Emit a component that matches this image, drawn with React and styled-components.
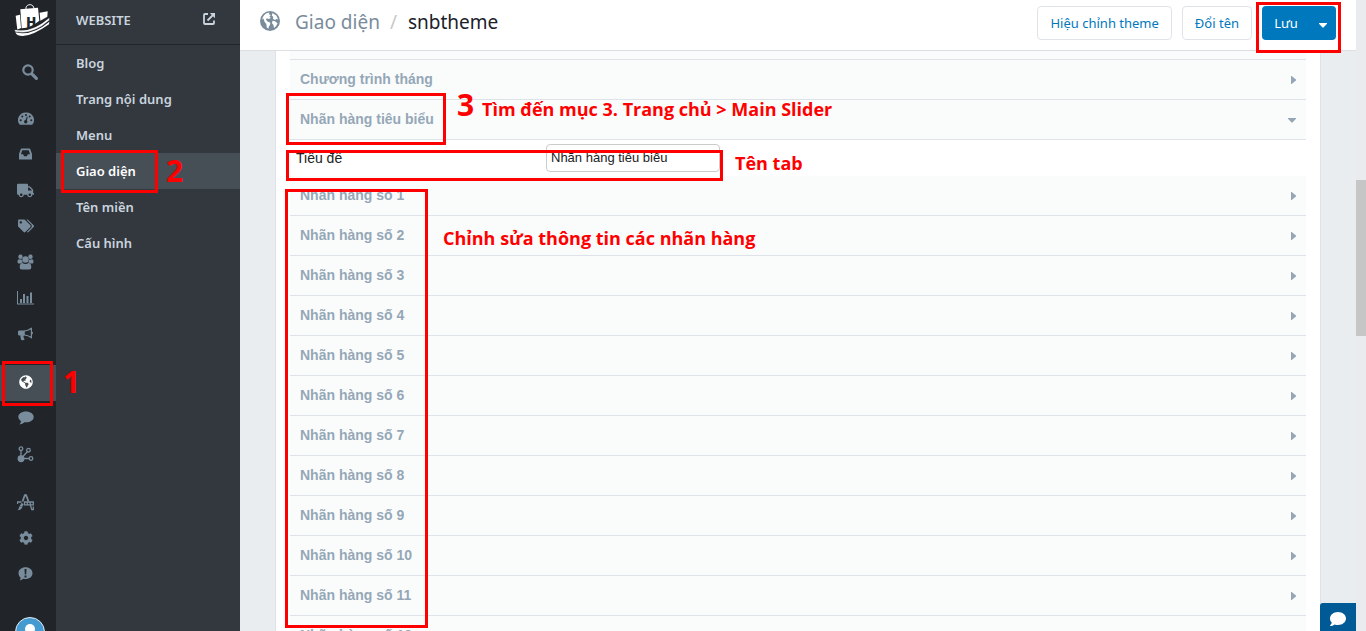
import React from 'react';
import styled, { createGlobalStyle, css } from 'styled-components';
import { FaTruck, FaTags, FaGlobeAmericas, FaComment, FaCog } from 'react-icons/fa';

const GlobalStyle = createGlobalStyle`
  *, *::before, *::after { box-sizing: border-box; }
  body { margin: 0; font-family: 'Open Sans', 'Noto Sans', sans-serif; overflow: hidden; }
  button, input { font: inherit; margin: 0; }
  a { color: inherit; text-decoration: none; }
`;

const Page = styled.div`
  display: flex;
  height: 100vh;
  overflow: hidden;
  background: #e9edf0;
`;

const Rail = styled.nav`
  flex: 0 0 56px;
  display: flex;
  flex-direction: column;
  background: #212429;
  color: #798c9c;
  & > * { flex-shrink: 0; }
`;

const LogoLink = styled.a`
  display: block;
  height: 37px;
  padding: 3px 0 0 14px;
`;

const SearchButton = styled.button`
  display: block;
  width: 100%;
  height: 36px;
  margin: 18px 0 10px;
  padding: 2px 0 0 4px;
  border: 0;
  background: none;
  color: inherit;
`;

const RailGroup = styled.div`
  display: flex;
  flex-direction: column;
  margin-bottom: 12px;
`;

const RailItem = styled.a`
  position: relative;
  display: flex;
  align-items: center;
  height: 36px;
  padding: 0 0 2px 17px;
  font-size: 15px;
  ${(p) => p.$active && css`background: #464e56; && { color: #fff; }`}
`;

const RailIcon = styled.span`
  display: flex;
  justify-content: center;
  width: 17px;
  svg { display: block; flex: none; }
`;

const Avatar = styled.a`
  display: block;
  margin: 12px 0 0 15px;
  height: 30px;
`;

const Sidebar = styled.aside`
  flex: 0 0 184px;
  background: #33373e;
  color: #c8d4de;
  font-family: 'Noto Sans', 'Open Sans', sans-serif;
  font-size: 13px;
  font-weight: 600;
`;

const SidebarHead = styled.div`
  display: flex;
  align-items: center;
  justify-content: space-between;
  height: 45px;
  padding: 0 25px 4px 20px;
  border-bottom: 1px solid #212429;
`;

const MenuItem = styled.a`
  position: relative;
  display: flex;
  align-items: center;
  height: 36px;
  padding-left: 20px;
  ${(p) => p.$active && css`background: #464e56; && { color: #fff; }`}
`;

const Main = styled.main`
  position: relative;
  flex: 1;
  min-width: 0;
  display: flex;
  flex-direction: column;
`;

const Header = styled.header`
  position: relative;
  z-index: 2;
  flex: none;
  display: flex;
  align-items: flex-start;
  gap: 10px;
  height: 51px;
  padding: 6px 20px 10px;
  background: #fff;
  border-bottom: 1px solid #dde0e3;
`;

const Breadcrumb = styled.div`
  flex: 1;
  display: flex;
  align-items: center;
  height: 32px;
  font-family: 'Noto Sans', sans-serif;
  font-size: 19px;
  color: #798c9c;
  svg { margin: 0 15px 2px 0; }
`;

const Slash = styled.span`
  margin: 0 11px 0 10px;
  color: #c8c8c8;
`;

const Current = styled.span`
  color: #1b2129;
`;

const Button = styled.button`
  height: 34px;
  padding: 0 12px;
  border: 1px solid #dfe3e8;
  border-radius: 4px;
  background: #fff;
  color: #0078bd;
  font-family: 'Noto Sans', sans-serif;
  font-size: 13px;
  white-space: nowrap;
`;

const SaveGroup = styled.div`
  position: relative;
  display: flex;
`;

const SaveButton = styled(Button)`
  width: 48px;
  border: 0;
  border-radius: 4px 0 0 4px;
  background: #0078bd;
  color: #fff;
`;

const SaveToggle = styled(SaveButton)`
  display: flex;
  align-items: center;
  justify-content: center;
  width: 26px;
  padding: 4px 0 0;
  border-radius: 0 4px 4px 0;
`;

const Scroll = styled.div`
  flex: 1;
  min-height: 0;
  overflow: hidden;
  padding: 0 35px;
`;

const Panel = styled.section`
  padding: 0 14px;
  background: #fff;
  border-left: 1px solid #dde3e8;
  border-right: 1px solid #dde3e8;
`;

const RowEnd = styled.div`
  height: 9px;
  background: #fafcfc;
  border-bottom: 1px solid #dde3e8;
`;

const Stack = styled.div`
  position: relative;
`;

const AccordionRow = styled.button`
  display: flex;
  align-items: center;
  justify-content: space-between;
  width: 100%;
  height: 40px;
  padding: 0 10px 2px;
  border: 0;
  border-bottom: 1px solid #dde3e8;
  background: #fafcfc;
  color: #95a7b7;
  font-family: 'Liberation Sans', Arial, sans-serif;
  font-size: 14px;
  font-weight: 700;
  text-align: left;
  svg { margin-top: 3px; }
`;

const FormRow = styled.div`
  position: relative;
  display: flex;
  align-items: flex-start;
  height: 36px;
  padding: 4px 0;
  font-family: 'Liberation Sans', Arial, sans-serif;
  font-size: 14px;
  color: #212121;
`;

const Label = styled.label`
  flex: 0 0 256px;
  padding-left: 6px;
  line-height: 28px;
`;

const TextInput = styled.input`
  width: 174px;
  height: 28px;
  padding: 0 4px 2px;
  border: 1px solid #ccc;
  border-radius: 4px;
  background: #fff;
  color: inherit;
  font-size: 13px;
`;

const Chat = styled.button`
  position: absolute;
  right: 0;
  bottom: 0;
  display: flex;
  align-items: center;
  justify-content: center;
  width: 36px;
  height: 28px;
  padding: 4px 0 0;
  border: 0;
  border-radius: 3px 0 0 0;
  background: #005a96;
  color: #fff;
`;

const Track = styled.div`
  flex: 0 0 10px;
  background: #e9ebee;
`;

const Thumb = styled.div`
  height: 156px;
  margin-top: 180px;
  background: #c6c6c6;
`;

const Mark = styled.div`
  position: absolute;
  z-index: 3;
  top: ${(p) => p.$y}px;
  left: ${(p) => p.$x}px;
  width: ${(p) => p.$w}px;
  height: ${(p) => p.$h}px;
  border: 3px solid #f00;
  pointer-events: none;
`;

const Note = styled.span`
  position: absolute;
  z-index: 3;
  top: ${(p) => p.$y}px;
  left: ${(p) => p.$x}px;
  color: #f00;
  font-family: 'Open Sans', 'Noto Sans', sans-serif;
  font-size: ${(p) => (p.$big ? 30 : 18)}px;
  line-height: ${(p) => (p.$big ? 32 : 24)}px;
  font-weight: 700;
  white-space: nowrap;
  pointer-events: none;
`;

const Logo = () => (
  <svg width="36" height="34" viewBox="41 9 108 102" aria-label="Haravan">
    <path d="M77 28C74 12 98 8 101 25" fill="none" stroke="#fff" strokeWidth="3" />
    <path d="M46 47L59 44L62 84L51 89Z" fill="#fff" />
    <path d="M60 28L113 23L117 62Q92 83 64 85Z" fill="#fff" />
    <path d="M118 38L142 34L141 50L120 62Z" fill="#fff" />
    <text x="77" y="84" fontFamily="Liberation Mono, monospace" fontWeight="700" fontSize="52" fill="#212429">H</text>
    <path d="M43 89Q94 100 147 53L147 61Q96 107 44 95Z" fill="#fff" stroke="#212429" strokeWidth="1" />
    <path d="M45 97Q95 109 147 65L146 73Q84 117 53 106Q47 103 45 97Z" fill="#fff" />
  </svg>
);

const GlobeIcon = () => (
  <svg width="20" height="20" viewBox="0 0 20 20">
    <circle cx="10" cy="10" r="10" fill="currentColor" />
    <g fill="#fff">
      <path d="M6.500 2.300L9.500 1.600L8.800 3.300L10.800 4L9.500 5.500L10.800 7L8.800 8L6.800 7.300L6 8.800L7.500 10.500L10.300 11.800L10 14L8.800 15.500L8.500 17.800L6.800 16.500L6.300 13L4.500 10.800L3.500 7.500L2.200 8.800Q2.800 4.500 6.500 2.300Z" />
      <path d="M12.500 2L16.300 4.600L18.200 8.500L16.500 8L15 9L12.800 7.800L13.300 6L11.800 4.500Z" />
      <path d="M12.500 9.800L15 10.200L17.500 12.200Q16.500 15.300 14 17L13.500 14L12 12.300Z" />
    </g>
  </svg>
);

const SearchIcon = () => (
  <svg width="18" height="18" viewBox="0 0 18 18" fill="none" stroke="currentColor">
    <circle cx="7" cy="7" r="4.7" strokeWidth="2.2" />
    <path d="M10.8 10.8L15.4 15.4" strokeWidth="3.2" strokeLinecap="round" />
  </svg>
);

const GaugeIcon = () => (
  <svg width="16" height="13" viewBox="0 0 16 13" fill="currentColor">
    <path d="M8 0.500A7.500 7.500 0 0 1 14.600 12.300Q14.400 12.700 14 12.700H2Q1.600 12.700 1.400 12.300A7.500 7.500 0 0 1 8 0.500Z" />
    <g fill="#212429">
      <circle cx="2.700" cy="8.300" r="1" />
      <circle cx="4.300" cy="4.500" r="1" />
      <circle cx="8" cy="2.900" r="1" />
      <circle cx="11.700" cy="4.500" r="1" />
      <circle cx="13.300" cy="8.300" r="1" />
      <circle cx="7.700" cy="9.800" r="1.700" />
      <path d="M7.200 9L8.900 4.600L9.700 4.900L8.600 9.400Z" />
    </g>
  </svg>
);

const InboxIcon = () => (
  <svg width="13" height="12" viewBox="0 0 13 12" fill="currentColor">
    <path fillRule="evenodd" d="M2.500 0.500H10.500Q11 0.500 11.200 1L13 6V11Q13 11.500 12.500 11.500H0.500Q0 11.500 0 11V6L1.800 1Q2 0.500 2.500 0.500ZM3.300 2.300L1.900 6.300H4.200L5 8.200H8L8.800 6.300H11.100L9.700 2.300Z" />
  </svg>
);

const PeopleIcon = () => (
  <svg width="17" height="16" viewBox="0 0 17 16" fill="currentColor">
    <circle cx="3.500" cy="2.800" r="2.200" />
    <circle cx="13.500" cy="2.800" r="2.200" />
    <circle cx="8.500" cy="5.500" r="3.200" />
    <path d="M0.500 8Q0.500 5 2 5.200Q4 6 5 5.500Q5 7.200 5.800 8.500Q4.500 8.500 3.800 9.500H2Q0.500 9.500 0.500 8ZM16.500 8Q16.500 5 15 5.200Q13 6 12 5.500Q12 7.200 11.200 8.500Q12.500 8.500 13.200 9.500H15Q16.500 9.500 16.500 8Z" />
    <path d="M2.700 13.500Q2.700 9 5.500 9Q8.500 11 11.500 9Q14.300 9 14.300 13.500Q14.300 15.500 12.300 15.500H4.700Q2.700 15.500 2.700 13.500Z" />
  </svg>
);

const ChartIcon = () => (
  <svg width="17" height="14" viewBox="0 0 17 14" fill="currentColor">
    <path d="M0 0h1v12.5h16v1H0zM3 8h2v4H3zM6 3h2v9H6zM9.500 5h2v7h-2zM13 1.500h2v10.500h-2z" />
  </svg>
);

const HornIcon = () => (
  <svg width="15" height="14" viewBox="0 0 15 14" fill="currentColor">
    <path fillRule="evenodd" d="M13.500 0.500Q14 0.500 14 1V4.500Q15 5 15 6T14 7.400V11Q14 11.500 13.500 11.500Q10 8.700 6 8.600Q5 9.300 5.700 10.300Q5.500 11.200 6.700 12.200Q5.500 13.800 3.300 13Q2.200 10.500 2.500 8.500H1.400Q0 8.500 0 7.200V4.800Q0 3.500 1.400 3.500H5.300Q9.500 3.500 13.500 0.500ZM12.800 2.600Q10 4.300 6.800 4.600V7.400Q10 7.800 12.800 9.500Z" />
  </svg>
);

const BranchIcon = () => (
  <svg width="17" height="17" viewBox="0 0 17 17" fill="none" stroke="currentColor" strokeWidth="1.300">
    <circle cx="4" cy="2.700" r="1.800" />
    <circle cx="11.500" cy="4.200" r="1.800" />
    <circle cx="14" cy="12.500" r="1.800" />
    <path d="M4 4.500v7M10.300 5.700L5 11.500M12 12.500H5" />
    <circle cx="4" cy="12.700" r="2.800" fill="currentColor" />
  </svg>
);

const DesignIcon = () => (
  <svg width="17" height="17" viewBox="0 0 17 17" fill="none" stroke="currentColor">
    <path d="M5.500 7.500L7.500 2Q8.500 0 9.500 2L11.500 7.500" strokeWidth="1.800" />
    <path d="M0.500 10V8H4.500M7.500 8H16.300V10.800H7.500Z" strokeWidth="1.300" />
    <path d="M10.300 8v3M13.200 8v3M13.300 11l1.500 4.500h1.500v-3" strokeWidth="1.300" />
    <path d="M5.500 9.500L4 12.500" strokeWidth="2.600" />
    <path d="M5.300 13.500Q4 16.300 0.500 16.300Q2 15 2 13Q3 11.500 5.300 13.500Z" fill="currentColor" stroke="none" />
  </svg>
);

const NoticeIcon = () => (
  <svg width="15" height="14" viewBox="0 0 15 14" fill="currentColor">
    <path d="M7.500 0.300C11.500 0.300 14.500 2.800 14.500 6.200S11.500 12 7.500 12Q6.200 12 5.200 11.700Q4 13 1.800 13.400Q2.700 12 2.500 10.500Q0.500 8.800 0.500 6.200C0.500 2.800 3.500 0.300 7.500 0.300Z" />
    <path d="M6.500 2h2L8.200 7.500H6.800zM6.500 8.500h2v2h-2z" fill="#212429" />
  </svg>
);

const ExternalIcon = () => (
  <svg width="12" height="12" viewBox="0 0 12 12" fill="none" stroke="currentColor" strokeWidth="1.800">
    <path d="M5 1H2Q1 1 1 2V10Q1 11 2 11H10Q11 11 11 10V7.500M4.500 7.500L10.500 1.500" />
    <path d="M6.800 0H12V5.200Z" fill="currentColor" stroke="none" />
  </svg>
);

const Caret = ({ open }) => (
  <svg width={open ? 8 : 5} height={open ? 5 : 8} viewBox={open ? '0 0 8 5' : '0 0 5 8'} fill="currentColor">
    <path d={open ? 'M0 0H8V0.700L4.500 4.500H3.500L0 0.700Z' : 'M0 0H0.700L5 3.500V4.500L0.700 8H0Z'} />
  </svg>
);

const Bubble = () => (
  <svg width="16" height="14" viewBox="0 0 16 14" fill="currentColor">
    <path d="M8 0.500C12.400 0.500 15.700 2.900 15.700 6S12.400 11.300 8 11.300L6.500 11.200Q4.500 13 1.500 13.500Q2.700 12 3 10.200Q0.300 8.600 0.300 6C0.300 2.900 3.600 0.500 8 0.500Z" />
  </svg>
);

const railGroups = [
  [
    ['Tổng quan', <GaugeIcon />],
    ['Đơn hàng', <InboxIcon />],
    ['Vận chuyển', <FaTruck size={17} />],
    ['Sản phẩm', <FaTags size={16} />],
    ['Khách hàng', <PeopleIcon />],
    ['Báo cáo', <ChartIcon />],
    ['Khuyến mãi', <HornIcon />],
  ],
  [
    ['Website', <FaGlobeAmericas size={14} />, true],
    ['Bình luận', <Bubble />],
    ['Kênh bán hàng', <BranchIcon />],
  ],
  [
    ['Ứng dụng', <DesignIcon />],
    ['Cấu hình', <FaCog size={14} />],
    ['Hỗ trợ', <NoticeIcon />],
  ],
];

const menu = ['Blog', 'Trang nội dung', 'Menu', 'Giao diện', 'Tên miền', 'Cấu hình'];
const brands = Array.from({ length: 12 }, (_, i) => `Nhãn hàng số ${i + 1}`);

export default function App() {
  return (
    <>
      <GlobalStyle />
      <Page>
        <Rail>
          <LogoLink href="#"><Logo /></LogoLink>
          <SearchButton aria-label="Tìm kiếm"><SearchIcon /></SearchButton>
          {railGroups.map((group, i) => (
            <RailGroup key={i}>
              {group.map(([name, icon, active]) => (
                <RailItem key={name} href="#" aria-label={name} $active={active}>
                  <RailIcon>{icon}</RailIcon>
                  {active && (
                    <>
                      <Mark $x={2} $y={-4} $w={51} $h={45} />
                      <Note $big $x={63} $y={1}>1</Note>
                    </>
                  )}
                </RailItem>
              ))}
            </RailGroup>
          ))}
          <Avatar href="#" aria-label="Tài khoản">
            <svg width="30" height="30" viewBox="0 0 30 30">
              <circle cx="15" cy="15" r="14.500" fill="#459bd0" stroke="#e4edf3" />
              <circle cx="15" cy="12" r="5" fill="#fff" />
              <path d="M5 25Q6 18 15 18T25 25Q15 33 5 25Z" fill="#fff" />
            </svg>
          </Avatar>
        </Rail>

        <Sidebar>
          <SidebarHead>
            <span>WEBSITE</span>
            <a href="#" aria-label="Xem website"><ExternalIcon /></a>
          </SidebarHead>
          {menu.map((name) => {
            const active = name === 'Giao diện';
            return (
              <MenuItem key={name} href="#" $active={active}>
                {name}
                {active && (
                  <>
                    <Mark $x={5} $y={-3} $w={97} $h={43} />
                    <Note $big $x={110} $y={2}>2</Note>
                  </>
                )}
              </MenuItem>
            );
          })}
        </Sidebar>

        <Main>
          <Header>
            <Breadcrumb>
              <GlobeIcon />
              <a href="#">Giao diện</a>
              <Slash>/</Slash>
              <Current>snbtheme</Current>
            </Breadcrumb>
            <Button>Hiệu chỉnh theme</Button>
            <Button>Đổi tên</Button>
            <SaveGroup>
              <SaveButton>Lưu</SaveButton>
              <SaveToggle aria-label="Thêm lựa chọn"><Caret open /></SaveToggle>
              <Mark $x={-6} $y={-4} $w={85} $h={51} />
            </SaveGroup>
          </Header>

          <Scroll>
            <Panel>
              <RowEnd />
              <AccordionRow>Chương trình tháng<Caret /></AccordionRow>
              <Stack>
                <AccordionRow aria-expanded="true">Nhãn hàng tiêu biểu<Caret open /></AccordionRow>
                <Mark $x={-4} $y={-7} $w={160} $h={52} />
                <Note $big $x={167} $y={-11}>3</Note>
                <Note $x={192} $y={-3}>Tìm đến mục 3. Trang chủ &gt; Main Slider</Note>
              </Stack>
              <FormRow>
                <Label htmlFor="tab-title">Tiêu đề</Label>
                <TextInput id="tab-title" defaultValue="Nhãn hàng tiêu biểu" />
                <Mark $x={-4} $y={10} $w={437} $h={31} />
                <Note $x={445} $y={11}>Tên tab</Note>
              </FormRow>
              <Stack>
                {brands.map((name) => (
                  <AccordionRow key={name}>{name}<Caret /></AccordionRow>
                ))}
                <Mark $x={-5} $y={13} $w={143} $h={439} />
                <Note $x={153} $y={50}>Chỉnh sửa thông tin các nhãn hàng</Note>
              </Stack>
            </Panel>
          </Scroll>
          <Chat aria-label="Trò chuyện"><FaComment size={16} /></Chat>
        </Main>
        <Track><Thumb /></Track>
      </Page>
    </>
  );
}
